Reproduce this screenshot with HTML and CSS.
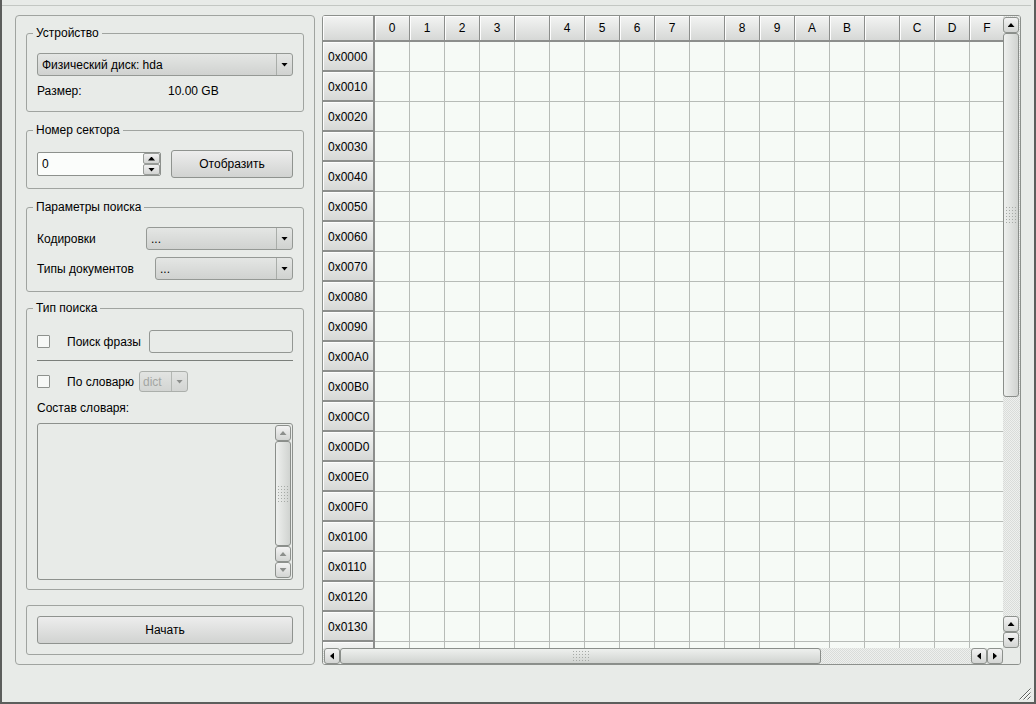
FILE: index.html
```html
<!DOCTYPE html>
<html lang="ru">
<head>
<meta charset="utf-8">
<title>Просмотр секторов</title>
<link rel="stylesheet" href="styles.css">
</head>
<body>
<div class="window">
  <div class="topline"></div>
  <div class="main">
    <div class="leftpanel">
      <fieldset class="group g1">
        <legend>Устройство</legend>
        <div class="combo"><span class="combo-text">Физический диск: hda</span><span class="combo-btn"><i class="tri down"></i></span></div>
        <div class="info"><span class="info-label">Размер:</span><span>10.00 GB</span></div>
      </fieldset>
      <fieldset class="group g2">
        <legend>Номер сектора</legend>
        <div class="row sector-row">
          <div class="spin">
            <span class="spin-text">0</span>
            <span class="spin-btns"><span class="spin-btn"><i class="tri up"></i></span><span class="spin-btn"><i class="tri down"></i></span></span>
          </div>
          <button class="btn show-btn">Отобразить</button>
        </div>
      </fieldset>
      <fieldset class="group g3">
        <legend>Параметры поиска</legend>
        <div class="row combo-row">
          <span>Кодировки</span>
          <div class="combo enc-combo"><span class="combo-text">...</span><span class="combo-btn"><i class="tri down"></i></span></div>
        </div>
        <div class="row combo-row">
          <span>Типы документов</span>
          <div class="combo doc-combo"><span class="combo-text">...</span><span class="combo-btn"><i class="tri down"></i></span></div>
        </div>
      </fieldset>
      <fieldset class="group g4">
        <legend>Тип поиска</legend>
        <div class="row phrase-row">
          <span class="check"></span>
          <span>Поиск фразы</span>
          <span class="phrase-input"></span>
        </div>
        <div class="sep"></div>
        <div class="row dict-row">
          <span class="check"></span>
          <span>По словарю</span>
          <div class="dict-combo"><span class="dict-text">dict</span><span class="dict-btn"><i class="tri down dim"></i></span></div>
        </div>
        <div class="dict-label">Состав словаря:</div>
        <div class="listbox">
          <div class="list-scroll">
            <span class="sb-btn"><i class="tri up dim"></i></span>
            <span class="sb-handle-v list-handle"><i class="grip-v"></i></span>
            <span class="sb-btn"><i class="tri up dim"></i></span>
            <span class="sb-btn"><i class="tri down dim"></i></span>
          </div>
        </div>
      </fieldset>
      <fieldset class="group g5">
        <button class="btn start-btn">Начать</button>
      </fieldset>
    </div>

    <div class="tableframe">
      <div class="viewport">
        <div class="grid">
          <div class="ch corner"></div>
          <div class="ch">0</div><div class="ch">1</div><div class="ch">2</div><div class="ch">3</div><div class="ch"></div>
          <div class="ch">4</div><div class="ch">5</div><div class="ch">6</div><div class="ch">7</div><div class="ch"></div>
          <div class="ch">8</div><div class="ch">9</div><div class="ch">A</div><div class="ch">B</div><div class="ch"></div>
          <div class="ch">C</div><div class="ch">D</div><div class="ch">F</div>

          <div class="rh">0x0000</div><span></span><span></span><span></span><span></span><span></span><span></span><span></span><span></span><span></span><span></span><span></span><span></span><span></span><span></span><span></span><span></span><span></span><span></span>
          <div class="rh">0x0010</div><span></span><span></span><span></span><span></span><span></span><span></span><span></span><span></span><span></span><span></span><span></span><span></span><span></span><span></span><span></span><span></span><span></span><span></span>
          <div class="rh">0x0020</div><span></span><span></span><span></span><span></span><span></span><span></span><span></span><span></span><span></span><span></span><span></span><span></span><span></span><span></span><span></span><span></span><span></span><span></span>
          <div class="rh">0x0030</div><span></span><span></span><span></span><span></span><span></span><span></span><span></span><span></span><span></span><span></span><span></span><span></span><span></span><span></span><span></span><span></span><span></span><span></span>
          <div class="rh">0x0040</div><span></span><span></span><span></span><span></span><span></span><span></span><span></span><span></span><span></span><span></span><span></span><span></span><span></span><span></span><span></span><span></span><span></span><span></span>
          <div class="rh">0x0050</div><span></span><span></span><span></span><span></span><span></span><span></span><span></span><span></span><span></span><span></span><span></span><span></span><span></span><span></span><span></span><span></span><span></span><span></span>
          <div class="rh">0x0060</div><span></span><span></span><span></span><span></span><span></span><span></span><span></span><span></span><span></span><span></span><span></span><span></span><span></span><span></span><span></span><span></span><span></span><span></span>
          <div class="rh">0x0070</div><span></span><span></span><span></span><span></span><span></span><span></span><span></span><span></span><span></span><span></span><span></span><span></span><span></span><span></span><span></span><span></span><span></span><span></span>
          <div class="rh">0x0080</div><span></span><span></span><span></span><span></span><span></span><span></span><span></span><span></span><span></span><span></span><span></span><span></span><span></span><span></span><span></span><span></span><span></span><span></span>
          <div class="rh">0x0090</div><span></span><span></span><span></span><span></span><span></span><span></span><span></span><span></span><span></span><span></span><span></span><span></span><span></span><span></span><span></span><span></span><span></span><span></span>
          <div class="rh">0x00A0</div><span></span><span></span><span></span><span></span><span></span><span></span><span></span><span></span><span></span><span></span><span></span><span></span><span></span><span></span><span></span><span></span><span></span><span></span>
          <div class="rh">0x00B0</div><span></span><span></span><span></span><span></span><span></span><span></span><span></span><span></span><span></span><span></span><span></span><span></span><span></span><span></span><span></span><span></span><span></span><span></span>
          <div class="rh">0x00C0</div><span></span><span></span><span></span><span></span><span></span><span></span><span></span><span></span><span></span><span></span><span></span><span></span><span></span><span></span><span></span><span></span><span></span><span></span>
          <div class="rh">0x00D0</div><span></span><span></span><span></span><span></span><span></span><span></span><span></span><span></span><span></span><span></span><span></span><span></span><span></span><span></span><span></span><span></span><span></span><span></span>
          <div class="rh">0x00E0</div><span></span><span></span><span></span><span></span><span></span><span></span><span></span><span></span><span></span><span></span><span></span><span></span><span></span><span></span><span></span><span></span><span></span><span></span>
          <div class="rh">0x00F0</div><span></span><span></span><span></span><span></span><span></span><span></span><span></span><span></span><span></span><span></span><span></span><span></span><span></span><span></span><span></span><span></span><span></span><span></span>
          <div class="rh">0x0100</div><span></span><span></span><span></span><span></span><span></span><span></span><span></span><span></span><span></span><span></span><span></span><span></span><span></span><span></span><span></span><span></span><span></span><span></span>
          <div class="rh">0x0110</div><span></span><span></span><span></span><span></span><span></span><span></span><span></span><span></span><span></span><span></span><span></span><span></span><span></span><span></span><span></span><span></span><span></span><span></span>
          <div class="rh">0x0120</div><span></span><span></span><span></span><span></span><span></span><span></span><span></span><span></span><span></span><span></span><span></span><span></span><span></span><span></span><span></span><span></span><span></span><span></span>
          <div class="rh">0x0130</div><span></span><span></span><span></span><span></span><span></span><span></span><span></span><span></span><span></span><span></span><span></span><span></span><span></span><span></span><span></span><span></span><span></span><span></span>
          <div class="rh"></div><span></span><span></span><span></span><span></span><span></span><span></span><span></span><span></span><span></span><span></span><span></span><span></span><span></span><span></span><span></span><span></span><span></span><span></span>
        </div>
      </div>
      <div class="vscroll">
        <span class="sb-btn"><i class="tri up"></i></span>
        <span class="sb-handle-v table-vhandle"><i class="grip-v"></i></span>
        <span class="spacer"></span>
        <span class="sb-btn"><i class="tri up"></i></span>
        <span class="sb-btn"><i class="tri down"></i></span>
      </div>
      <div class="hscroll">
        <span class="sb-btn"><i class="tri left"></i></span>
        <span class="sb-handle-h"><i class="grip-h"></i></span>
        <span class="spacer"></span>
        <span class="sb-btn"><i class="tri left"></i></span>
        <span class="sb-btn"><i class="tri right"></i></span>
      </div>
      <div class="scroll-corner"></div>
    </div>
  </div>
  <div class="footer">
    <svg class="resize-grip" width="13" height="12" viewBox="0 0 13 12">
      <path d="M12.5 0.5L1.5 11.5M12.5 4.5L5.5 11.5M12.5 8.5L9.5 11.5" stroke="#5f625f" stroke-width="1" fill="none"/>
      <path d="M12.5 1.5L2.5 11.5M12.5 5.5L6.5 11.5M12.5 9.5L10.5 11.5" stroke="#ffffff" stroke-width="1" fill="none"/>
    </svg>
  </div>
</div>
</body>
</html>
```

FILE: styles.css
```css
* { box-sizing: border-box; }

body {
  margin: 0;
  font-family: "Liberation Sans", Arial, sans-serif;
  font-size: 12px;
  color: #000;
  background: #e8ebe8;
}

.window {
  width: 1036px;
  height: 704px;
  background: #e8ebe8;
  border: 2px solid #5c5e5c;
  border-top: 0;
  display: flex;
  flex-direction: column;
}

.topline {
  height: 1px;
  margin: 5px 3px 0 0;
  background: #c3c7c3;
}

.main {
  display: flex;
  gap: 7px;
  padding: 9px 11px 0 13px;
}

/* ---------- left panel ---------- */
.leftpanel {
  width: 300px;
  height: 650px;
  flex: none;
  border: 1px solid #a0a4a0;
  border-radius: 4px;
  padding: 10px 10px 9px;
  display: flex;
  flex-direction: column;
}

.group {
  margin: 0;
  padding: 0 10px;
  border: 1px solid #a0a4a0;
  border-radius: 3px;
  min-width: 0;
}

.group legend {
  padding: 0 3px;
  margin-left: -4px;
  line-height: 14px;
}

.g1 { height: 86px; padding-top: 13px; }
.g2 { height: 66px; margin-top: 11px; padding-top: 13px; }
.g3 { height: 92px; margin-top: 11px; padding-top: 13px; }
.g4 { flex: 1; margin-top: 9px; padding-top: 15px; }
.g5 { height: 50px; flex: none; margin-top: 15px; padding-top: 10px; }

.row { display: flex; align-items: center; }

/* combo box */
.combo {
  display: flex;
  height: 23px;
  border: 1px solid #959995;
  border-radius: 3px;
  background: linear-gradient(#e4e6e4, #d0d2d0);
}
.combo-text {
  flex: 1;
  padding-left: 4px;
  display: flex;
  align-items: center;
  white-space: nowrap;
  overflow: hidden;
}
.combo-btn {
  width: 16px;
  flex: none;
  border-left: 1px solid #a9ada9;
  display: flex;
  align-items: center;
  justify-content: center;
}

.info { display: flex; margin-top: 8px; line-height: 14px; }
.info-label { width: 131px; }

/* triangles */
.tri { display: block; width: 7px; height: 4px; background: #000; }
.tri.up { clip-path: polygon(50% 0, 100% 100%, 0 100%); }
.tri.down { clip-path: polygon(0 0, 100% 0, 50% 100%); }
.tri.left { width: 4px; height: 7px; clip-path: polygon(100% 0, 100% 100%, 0 50%); }
.tri.right { width: 4px; height: 7px; clip-path: polygon(0 0, 100% 50%, 0 100%); }
.tri.dim { background: #8c8f8c; }

/* spin box */
.sector-row { height: 28px; }
.spin {
  display: flex;
  width: 124px;
  height: 24px;
  flex: none;
  border: 1px solid #8d918d;
  border-radius: 2px;
  background: #fbfdfb;
}
.spin-text { flex: 1; padding-left: 4px; display: flex; align-items: center; }
.spin-btns { width: 17px; display: flex; flex-direction: column; }
.spin-btn {
  flex: 1;
  display: flex;
  align-items: center;
  justify-content: center;
  background: linear-gradient(#f1f1f1, #d2d4d2);
  border: 1px solid #989c98;
  border-radius: 2px;
}

/* buttons */
.btn {
  font: inherit;
  color: #000;
  height: 28px;
  padding: 0;
  border: 1px solid #8f938f;
  border-radius: 3px;
  background: linear-gradient(#ededed, #d1d3d1);
}
.show-btn { width: 124px; margin-left: 10px; }
.start-btn { width: 100%; }

/* search params */
.combo-row { height: 23px; }
.combo-row + .combo-row { margin-top: 7px; }
.enc-combo { margin-left: auto; width: 147px; }
.doc-combo { margin-left: auto; width: 138px; }

/* search type */
.check {
  width: 13px;
  height: 13px;
  flex: none;
  border: 1px solid #8d918d;
  border-radius: 1px;
  background: #f6f8f6;
  margin-right: 17px;
}
.phrase-row { height: 23px; }
.phrase-input {
  margin-left: auto;
  width: 144px;
  height: 23px;
  border: 1px solid #939793;
  border-radius: 3px;
  background: #e8ebe8;
}
.sep { height: 1px; margin-top: 7px; background: #7b7f7b; }
.dict-row { height: 21px; margin-top: 10px; }
.dict-combo {
  display: flex;
  width: 49px;
  height: 21px;
  margin-left: 5px;
  border: 1px solid #abafab;
  border-radius: 3px;
  background: linear-gradient(#e2e4e2, #d3d5d3);
  color: #a3a6a3;
}
.dict-text { flex: 1; padding-left: 3px; display: flex; align-items: center; }
.dict-btn {
  width: 16px;
  border-left: 1px solid #b3b7b3;
  display: flex;
  align-items: center;
  justify-content: center;
}
.dict-label { margin-top: 9px; line-height: 14px; }

.listbox {
  height: 157px;
  margin-top: 8px;
  border: 1px solid #8d918d;
  border-radius: 3px;
  padding: 1px;
  display: flex;
  justify-content: flex-end;
}
.list-scroll { width: 16px; display: flex; flex-direction: column; }
.list-handle { flex: 1; }

/* scrollbars */
.sb-btn {
  height: 16px;
  width: 16px;
  flex: none;
  border: 1px solid #8d918d;
  border-radius: 3px;
  background: linear-gradient(#f3f3f3, #d3d5d3);
  display: flex;
  align-items: center;
  justify-content: center;
}
.sb-handle-v {
  border: 1px solid #8a8e8a;
  border-radius: 3px;
  background: linear-gradient(90deg, #eef0ee, #d0d3d0);
  display: flex;
  align-items: center;
  justify-content: center;
}
.sb-handle-h {
  border: 1px solid #8a8e8a;
  border-radius: 3px;
  background: linear-gradient(#eef0ee, #d0d3d0);
  display: flex;
  align-items: center;
  justify-content: center;
}
.grip-v, .grip-h {
  display: block;
  background-image: radial-gradient(circle, #a6aaa6 30%, transparent 42%);
  background-size: 3px 3px;
}
.grip-v { width: 12px; height: 18px; }
.grip-h { width: 18px; height: 12px; }

.spacer { flex: 1; }

/* ---------- table ---------- */
.tableframe {
  width: 699px;
  height: 650px;
  flex: none;
  border: 1px solid #8c908c;
  border-radius: 3px;
  display: grid;
  grid-template-columns: 680px 17px;
  grid-template-rows: 632px 16px;
  overflow: hidden;
}

.viewport { overflow: hidden; background: #f6faf6; }

.grid {
  display: grid;
  grid-template-columns: 52px repeat(18, 35px);
  grid-template-rows: 26px;
  grid-auto-rows: 30px;
}
.grid > span {
  border-right: 1px solid #b7bbb7;
  border-bottom: 1px solid #b7bbb7;
}
.ch, .rh {
  display: flex;
  align-items: center;
  background: linear-gradient(#f3f4f3, #d6d8d6);
  border-right: 1px solid #8c8e8c;
  border-bottom: 2px solid #8c8e8c;
  box-shadow: inset 1px 1px 0 #fdfdfd;
}
.ch { justify-content: center; }
.rh { padding-left: 5px; padding-top: 1px; border-right-width: 2px; }
.corner { border-right-width: 2px; }

.vscroll, .hscroll {
  background-color: #e4e7e4;
  background-image: repeating-conic-gradient(#d9dcd9 0 25%, #eef0ee 0 50%);
  background-size: 2px 2px;
}
.vscroll {
  display: flex;
  flex-direction: column;
  padding: 1px 1px 0 0;
}
.table-vhandle { height: 364px; flex: none; }
.hscroll { display: flex; padding-left: 1px; }
.sb-handle-h { width: 481px; flex: none; }
.scroll-corner { background: #e8ebe8; }

/* footer & grip */
.footer {
  flex: 1;
  display: flex;
  justify-content: flex-end;
  align-items: flex-end;
  padding: 0 3px 2px 0;
}
.resize-grip { display: block; }
```
